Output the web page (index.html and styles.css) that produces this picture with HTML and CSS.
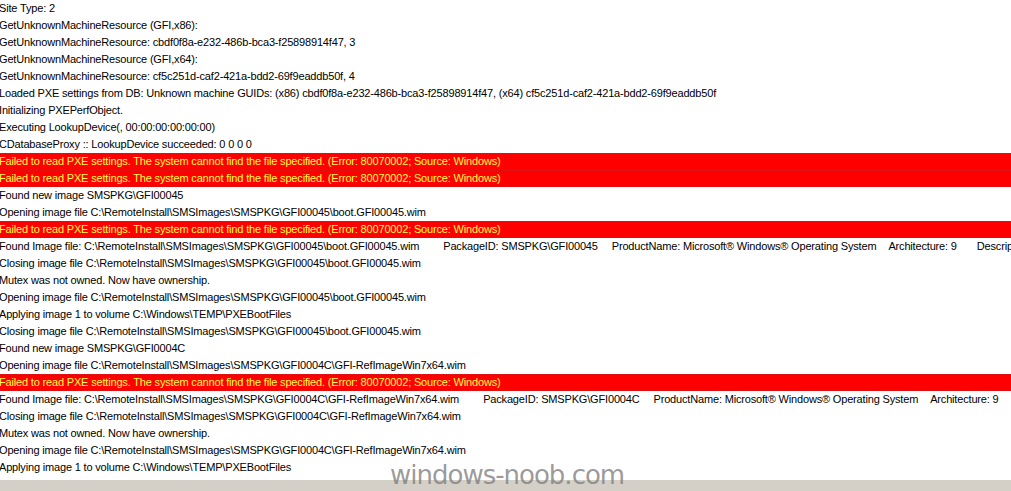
FILE: index.html
```html
<!doctype html>
<html>
	<head>
		<title>Log Viewer</title>
		<link rel="stylesheet" href="styles.css">
	</head>
	<body>
		<div class="log">
			<div class="row">Site Type: 2</div>
			<div class="row">GetUnknownMachineResource (GFI,x86):</div>
			<div class="row">GetUnknownMachineResource: cbdf0f8a-e232-486b-bca3-f25898914f47, 3</div>
			<div class="row">GetUnknownMachineResource (GFI,x64):</div>
			<div class="row">GetUnknownMachineResource: cf5c251d-caf2-421a-bdd2-69f9eaddb50f, 4</div>
			<div class="row">Loaded PXE settings from DB: Unknown machine GUIDs: (x86) cbdf0f8a-e232-486b-bca3-f25898914f47, (x64) cf5c251d-caf2-421a-bdd2-69f9eaddb50f</div>
			<div class="row">Initializing PXEPerfObject.</div>
			<div class="row">Executing LookupDevice(, 00:00:00:00:00:00)</div>
			<div class="row">CDatabaseProxy :: LookupDevice succeeded: 0 0 0 0</div>
			<div class="row error">Failed to read PXE settings. The system cannot find the file specified. (Error: 80070002; Source: Windows)</div>
			<div class="row error">Failed to read PXE settings. The system cannot find the file specified. (Error: 80070002; Source: Windows)</div>
			<div class="row">Found new image SMSPKG\GFI00045</div>
			<div class="row">Opening image file C:\RemoteInstall\SMSImages\SMSPKG\GFI00045\boot.GFI00045.wim</div>
			<div class="row error">Failed to read PXE settings. The system cannot find the file specified. (Error: 80070002; Source: Windows)</div>
			<div class="row">Found Image file: C:\RemoteInstall\SMSImages\SMSPKG\GFI00045\boot.GFI00045.wim<span class="col pkg">PackageID: SMSPKG\GFI00045</span><span class="col prod">ProductName: Microsoft® Windows® Operating System</span><span class="col arch">Architecture: 9</span><span class="col desc">Descrip</span></div>
			<div class="row">Closing image file C:\RemoteInstall\SMSImages\SMSPKG\GFI00045\boot.GFI00045.wim</div>
			<div class="row">Mutex was not owned. Now have ownership.</div>
			<div class="row">Opening image file C:\RemoteInstall\SMSImages\SMSPKG\GFI00045\boot.GFI00045.wim</div>
			<div class="row">Applying image 1 to volume C:\Windows\TEMP\PXEBootFiles</div>
			<div class="row">Closing image file C:\RemoteInstall\SMSImages\SMSPKG\GFI00045\boot.GFI00045.wim</div>
			<div class="row">Found new image SMSPKG\GFI0004C</div>
			<div class="row">Opening image file C:\RemoteInstall\SMSImages\SMSPKG\GFI0004C\GFI-RefImageWin7x64.wim</div>
			<div class="row error">Failed to read PXE settings. The system cannot find the file specified. (Error: 80070002; Source: Windows)</div>
			<div class="row">Found Image file: C:\RemoteInstall\SMSImages\SMSPKG\GFI0004C\GFI-RefImageWin7x64.wim<span class="col pkg">PackageID: SMSPKG\GFI0004C</span><span class="col prod">ProductName: Microsoft® Windows® Operating System</span><span class="col arch">Architecture: 9</span></div>
			<div class="row">Closing image file C:\RemoteInstall\SMSImages\SMSPKG\GFI0004C\GFI-RefImageWin7x64.wim</div>
			<div class="row">Mutex was not owned. Now have ownership.</div>
			<div class="row">Opening image file C:\RemoteInstall\SMSImages\SMSPKG\GFI0004C\GFI-RefImageWin7x64.wim</div>
			<div class="row">Applying image 1 to volume C:\Windows\TEMP\PXEBootFiles</div>
		</div>

		<div class="details"></div>

		<div class="watermark">windows-noob.com</div>
	</body>
</html>
```

FILE: styles.css
```css
html, body {
	margin: 0;
	padding: 0;
	background-color: white;
	overflow: hidden;
}

body {
	width: 1011px;
	height: 491px;
	position: relative;
	font-family: "Liberation Sans", Arial, sans-serif;
	font-size: 11px;
	letter-spacing: -0.17px;
	color: black;
}

.row {
	height: 17px;
	line-height: 17px;
	white-space: nowrap;
	overflow: hidden;
	text-indent: -1px;
}

.row.error {
	background-color: #ff0000;
	color: #ffff40;
	box-shadow: inset 0 1px 0 #e01010, inset 0 -1px 0 #e01010;
}

.col { display: inline-block; text-indent: 0; }
.col.pkg { margin-left: 24px; }
.col.prod { margin-left: 14px; }
.col.arch { margin-left: 12px; }
.col.desc { margin-left: 20px; }

.details {
	margin-top: 4px;
	height: 11px;
	background-color: #d4d0c8;
}

.watermark {
	position: absolute;
	left: 390px;
	top: 460px;
	font-family: "DejaVu Sans", Verdana, sans-serif;
	font-size: 26px;
	letter-spacing: -1px;
	color: rgba(128, 128, 128, 0.8);
}
```
